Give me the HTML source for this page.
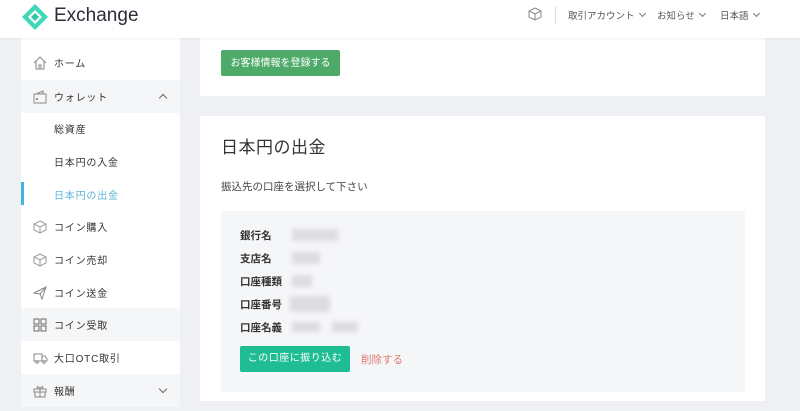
<!DOCTYPE html>
<html><head><meta charset="utf-8"><style>
*{margin:0;padding:0;box-sizing:border-box}
body{width:800px;height:401px;overflow:hidden;background:#eef0f4;font-family:"Liberation Sans","Noto Sans CJK JP",sans-serif;position:relative;color:#333}
.hdr{position:absolute;left:0;top:0;width:800px;height:38px;background:#fff;box-shadow:0 1px 3px rgba(0,0,0,.06);z-index:2}
.logo{position:absolute;left:21px;top:3px}
.brand{position:absolute;left:54px;top:5px;font-size:19px;color:#2d2d3a}
.nav{position:absolute;top:8px;font-size:9.5px;color:#555}
.chev{display:inline-block;width:5px;height:5px;border-right:1px solid #777;border-bottom:1px solid #777;transform:rotate(45deg);margin-left:5px;vertical-align:3px}
.side{position:absolute;left:21px;top:38px;width:159px;height:363px;background:#fff}
.it{position:absolute;left:0;width:159px;height:33px;font-size:10px;color:#333;line-height:37px;padding-left:33px;letter-spacing:.8px}
.it.g{background:#f5f6f8}
.ic{position:absolute;left:12px;top:10px}
.card{position:absolute;left:200px;width:565px;background:#fff}
.blur{position:absolute;background:#dcdde2;filter:blur(2px)}
.lb{position:absolute;left:240px;font-size:10.5px;font-weight:bold;color:#333}
</style></head><body>
<div class="hdr">
<svg class="logo" width="28" height="28" viewBox="0 0 28 28"><polygon points="14,1 27,14 14,27 1,14" fill="#3fd8b8"/><polygon points="14,7 21,14 14,21 7,14" fill="#fff"/><polygon points="14,10 18,14 14,18 10,14" fill="#2fc8a6"/></svg>
<div class="brand">Exchange</div>
<svg style="position:absolute;left:528px;top:7px" width="14" height="14" viewBox="0 0 14 14" fill="none" stroke="#888"><path d="M7 1L13 4V10L7 13L1 10V4Z M1 4L7 7L13 4 M7 7V13"/></svg>
<div style="position:absolute;left:555px;top:6px;width:1px;height:18px;background:#ddd"></div>
<div class="nav" style="left:568px">取引アカウント<span class="chev"></span></div>
<div class="nav" style="left:657px">お知らせ<span class="chev"></span></div>
<div class="nav" style="left:720px">日本語<span class="chev"></span></div>
</div>
<div class="side">
<div class="it" style="top:8px"><svg class="ic" width="14" height="14" viewBox="0 0 14 14" fill="none" stroke="#888"><path d="M1 7L7 1L13 7 M3 5V13H11V5 M6 13V9H8V13"/></svg>ホーム</div>
<div class="it g" style="top:42px"><svg class="ic" width="14" height="14" viewBox="0 0 14 14" fill="none" stroke="#888"><rect x="1" y="4" width="12" height="9"/><path d="M3 4L10 1V4"/><circle cx="4" cy="9" r=".6" fill="#888"/></svg>ウォレット<span style="position:absolute;right:14px;top:15px;width:6px;height:6px;border-left:1px solid #666;border-top:1px solid #666;transform:rotate(45deg)"></span></div>
<div class="it" style="top:74px">総資産</div>
<div class="it" style="top:107px">日本円の入金</div>
<div class="it" style="top:140px;color:#5ab4d8">日本円の出金</div>
<div style="position:absolute;left:0;top:144px;width:3px;height:23px;background:#44b2dc"></div>
<div class="it" style="top:172px"><svg class="ic" width="14" height="14" viewBox="0 0 14 14" fill="none" stroke="#999"><path d="M7 1L13 4V10L7 13L1 10V4Z M1 4L7 7L13 4 M7 7V13"/></svg>コイン購入</div>
<div class="it" style="top:205px"><svg class="ic" width="14" height="14" viewBox="0 0 14 14" fill="none" stroke="#999"><path d="M7 1L13 4V10L7 13L1 10V4Z M1 4L7 7L13 4 M7 7V13"/></svg>コイン売却</div>
<div class="it" style="top:238px"><svg class="ic" width="14" height="14" viewBox="0 0 14 14" fill="none" stroke="#888"><path d="M1 7L13 1L9 13L7 8Z M7 8L13 1"/></svg>コイン送金</div>
<div class="it g" style="top:270px"><svg class="ic" width="14" height="14" viewBox="0 0 14 14" fill="none" stroke="#666"><rect x="1" y="1" width="5" height="5"/><rect x="8" y="1" width="5" height="5"/><rect x="1" y="8" width="5" height="5"/><path d="M8 8H13V13H8Z"/></svg>コイン受取</div>
<div class="it" style="top:303px"><svg class="ic" width="15" height="14" viewBox="0 0 15 14" fill="none" stroke="#888"><path d="M1 3H9V10H1Z M9 5H12L14 8V10H9"/><circle cx="4" cy="11" r="1.3"/><circle cx="11" cy="11" r="1.3"/></svg>大口OTC取引</div>
<div class="it g" style="top:336px"><svg class="ic" width="14" height="14" viewBox="0 0 14 14" fill="none" stroke="#888"><path d="M1 5H13V8H1Z M2 8V13H12V8 M7 5V13 M7 5C5 1 3 3 5 5 M7 5C9 1 11 3 9 5"/></svg>報酬<span style="position:absolute;right:14px;top:12px;width:6px;height:6px;border-right:1px solid #666;border-bottom:1px solid #666;transform:rotate(45deg)"></span></div>
</div>
<div class="card" style="top:38px;height:58px"><div style="position:absolute;left:21px;top:12px;width:119px;height:26px;background:#4eaa68;color:#fff;font-size:10px;line-height:28px;text-align:center;border-radius:2px">お客様情報を登録する</div></div>
<div class="card" style="top:116px;height:285px">
<div style="position:absolute;left:21px;top:17px;font-size:17px;color:#333;letter-spacing:.5px">日本円の出金</div>
<div style="position:absolute;left:21px;top:63px;font-size:10.5px;color:#444">振込先の口座を選択して下さい</div>
<div style="position:absolute;left:21px;top:95px;width:524px;height:181px;background:#f5f6f8"></div>
</div>
<div class="lb" style="top:228px">銀行名</div>
<div class="lb" style="top:251px">支店名</div>
<div class="lb" style="top:274px">口座種類</div>
<div class="lb" style="top:297px">口座番号</div>
<div class="lb" style="top:320px">口座名義</div>
<div class="blur" style="left:292px;top:229px;width:46px;height:12px"></div>
<div class="blur" style="left:292px;top:252px;width:28px;height:12px"></div>
<div class="blur" style="left:292px;top:275px;width:20px;height:12px"></div>
<div class="blur" style="left:290px;top:296px;width:40px;height:16px"></div>
<div class="blur" style="left:292px;top:322px;width:28px;height:10px"></div>
<div class="blur" style="left:332px;top:322px;width:26px;height:10px"></div>
<div style="position:absolute;left:240px;top:346px;width:110px;height:26px;background:#1fbd94;color:#fff;font-size:10px;line-height:26px;text-align:center;border-radius:2px;letter-spacing:.5px">この口座に振り込む</div>
<div style="position:absolute;left:361px;top:352px;font-size:10.5px;color:#e07a72">削除する</div>
</body></html>
